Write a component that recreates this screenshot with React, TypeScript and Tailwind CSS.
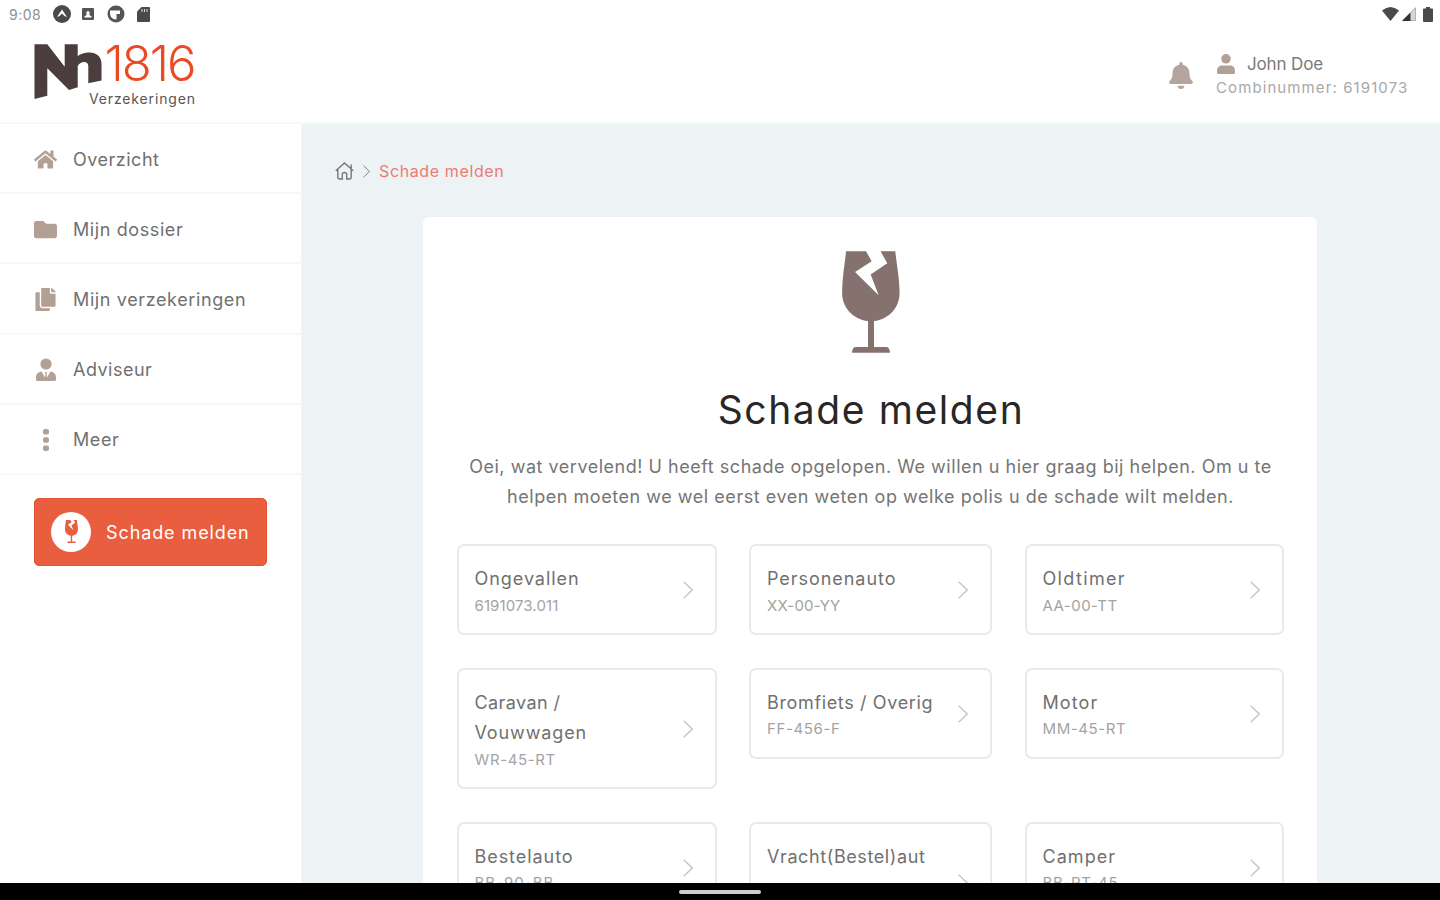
import React from "react";
import { FaBell, FaCopy, FaFolder, FaHome } from "react-icons/fa";

function BrokenGlass({ className }: { className?: string }) {
  return (
    <svg viewBox="126 61 174 307" className={className} fill="currentColor">
      <path d="M138 62H198L215 92L165 124L236 194L212 132L262 98L242 62H286C290 100 299 145 299 188C299 230 268 266 222 272V350H258Q270 350 270 367H156Q156 350 168 350H204V272C158 266 126 230 126 188C126 145 134 100 138 62Z" />
    </svg>
  );
}

function Logo() {
  return (
    <svg className="block h-[72px] w-[170px]" viewBox="0 0 170 72">
      <path
        fill="#4b3d3d"
        d="M0.5 4.3H13.3L30.7 26.7V4.3H43.7V16C48 12.800 53 11.800 58 12.700C64.500 13.800 67.500 18 67.500 24V40.500L54.300 43.300V26C54.300 20.500 46.500 20.800 43.700 26V47.300L35 50L13.300 28.300V55.700L0.500 59Z"
      />
      <text x="70.500" y="40.500" fill="#ea4b25" fontSize="49" fontWeight="300" letterSpacing="-2" fontFamily="Inter, sans-serif">
        1816
      </text>
      <text x="55" y="64" fill="#5c5555" fontSize="14" letterSpacing="0.86" fontFamily="Inter, sans-serif">
        Verzekeringen
      </text>
    </svg>
  );
}

function PersonIcon({ className }: { className?: string }) {
  return (
    <svg viewBox="0 0 18 20" className={className} fill="currentColor">
      <circle cx="9" cy="4.800" r="4.800" />
      <path d="M0 17.500C0 13.500 2 11.500 5 11.500H13C16 11.500 18 13.500 18 17.500V18.500Q18 20 16.500 20H1.500Q0 20 0 18.500Z" />
    </svg>
  );
}

function AdviserIcon() {
  return (
    <svg viewBox="0 0 20 24" className="h-6 w-5" fill="currentColor">
      <circle cx="10" cy="6" r="5.600" />
      <path d="M0 20C0 16 2 14 5.500 13.500L9 19.500L9.500 16L9 14H11L10.500 16L11 19.500L14.500 13.500C18 14 20 16 20 20V21.500Q20 23 18.500 23H1.500Q0 23 0 21.500Z" />
    </svg>
  );
}

function DotsIcon() {
  return (
    <svg viewBox="0 0 6 22" className="h-[22px] w-1.5" fill="currentColor">
      <rect width="6" height="5.500" y="0" rx="2" />
      <rect width="6" height="5.500" y="8.200" rx="2" />
      <rect width="6" height="5.500" y="16.400" rx="2" />
    </svg>
  );
}

function Chevron({ className }: { className?: string }) {
  return (
    <svg viewBox="0 0 10 18" className={className} fill="none" stroke="currentColor" strokeWidth="1.300">
      <path d="M0.700 0.700L9.200 9L0.700 17.300" />
    </svg>
  );
}

function StatusBar() {
  return (
    <div className="flex h-7 shrink-0 items-center justify-between pr-[7px] pl-[9px] text-[#4a4a4a]">
      <div className="flex items-center">
        <span className="w-[44px] pt-px text-sm tracking-[0.48px] text-[#8f8f8f]">9:08</span>
        <svg className="h-[18px] w-[18px]" viewBox="0 0 18 18">
          <circle cx="9" cy="9" r="9" fill="#4a4a4a" />
          <path d="M4 12L9 4.500L14 12L11.500 11L9 8.500L6.500 11Z" fill="#fff" />
        </svg>
        <svg className="ml-[11px] h-3 w-3" viewBox="0 0 12 12">
          <rect width="12" height="12" rx="1" fill="#555" />
          <path d="M2.500 9.500V8.500L4.500 7V4.500a1.500 1.500 0 0 1 3 0V7L9.500 8.500V9.500Z" fill="#fff" />
        </svg>
        <svg className="ml-[13px] h-[18px] w-[18px]" viewBox="0 0 18 18">
          <circle cx="9" cy="9" r="8.500" fill="#555" />
          <path d="M3 5.500H13V9H9.500V14.500C5.500 14.500 3 11.500 3 8.500Z" fill="#fff" />
        </svg>
        <svg className="ml-3 h-[15px] w-[13px]" viewBox="0 0 13 15">
          <path d="M4.500 0H12Q13 0 13 1V14Q13 15 12 15H1Q0 15 0 14V4.500Z" fill="#4a4a4a" />
          <path d="M5 2V5M7.500 2V5M10 2V5" stroke="#ddd" strokeWidth="1" />
        </svg>
      </div>
      <div className="flex items-center">
        <svg className="h-[14px] w-[17px]" viewBox="0 0 17 14">
          <path d="M0 3.500Q8.500 -3.500 17 3.500L8.500 14Z" fill="#4a4a4a" />
        </svg>
        <svg className="ml-[3px] h-[14px] w-[14px]" viewBox="0 0 14 14">
          <path d="M13.500 0.700V13.500H0.700Z" fill="#d6d6d6" stroke="#8a8a8a" strokeWidth="0.600" />
          <path d="M8.500 5.500V14H0Z" fill="#333" />
        </svg>
        <svg className="ml-[7px] h-[15px] w-[10px]" viewBox="0 0 10 15">
          <path d="M3 0H7V1.500H9Q10 1.500 10 2.500V14Q10 15 9 15H1Q0 15 0 14V2.500Q0 1.500 1 1.500H3Z" fill="#4a4a4a" />
        </svg>
      </div>
    </div>
  );
}

const menu = [
  { label: "Overzicht", icon: <FaHome size={23} />, spacing: "tracking-[0.5px]" },
  { label: "Mijn dossier", icon: <FaFolder size={23} />, spacing: "tracking-[0.6px]" },
  { label: "Mijn verzekeringen", icon: <FaCopy size={23} />, spacing: "tracking-[0.62px]" },
  { label: "Adviseur", icon: <AdviserIcon />, spacing: "tracking-[0.48px]" },
  { label: "Meer", icon: <DotsIcon />, spacing: "tracking-[0.58px]" },
];

type Policy = { name: React.ReactNode; ts: string; code: string; cs: string };

const policies: Policy[] = [
  { name: "Ongevallen", ts: "tracking-[0.95px]", code: "6191073.011", cs: "tracking-[0.1px]" },
  { name: "Personenauto", ts: "tracking-[0.95px]", code: "XX-00-YY", cs: "tracking-[0.19px]" },
  { name: "Oldtimer", ts: "tracking-[1.35px]", code: "AA-00-TT", cs: "tracking-[0.47px]" },
  { name: <>Caravan /<br /><span className="tracking-[0.87px]">Vouwwagen</span></>, ts: "tracking-[0.41px]", code: "WR-45-RT", cs: "tracking-[0.62px]" },
  { name: "Bromfiets / Overig", ts: "tracking-[0.64px]", code: "FF-456-F", cs: "tracking-[0.63px]" },
  { name: "Motor", ts: "tracking-[1.1px]", code: "MM-45-RT", cs: "tracking-[0.6px]" },
  { name: "Bestelauto", ts: "tracking-[0.95px]", code: "BB-90-BB", cs: "tracking-[0.99px]" },
  { name: <>Vracht(Bestel)aut<br />{"\u00a0"}</>, ts: "tracking-[0.6px]", code: "VV-00-BB", cs: "tracking-[0.6px]" },
  { name: "Camper", ts: "tracking-[1.05px]", code: "BB-RT-45", cs: "tracking-[0.66px]" },
];

function PolicyCard({ name, ts, code, cs }: Policy) {
  return (
    <button className="flex items-center justify-between rounded-[7px] border-2 border-[#e9e9e9] pt-[18px] pr-[22px] pb-[16.5px] pl-4 text-left">
      <span className="flex flex-col whitespace-nowrap">
        <span className={`text-lg leading-[30.5px] text-[#707070] ${ts}`}>{name}</span>
        <span className={`text-[15px] leading-[22px] text-[#a3a3a3] ${cs}`}>{code}</span>
      </span>
      <Chevron className="h-[18px] w-[10px] shrink-0 text-[#c4c4c4]" />
    </button>
  );
}

export default function App() {
  return (
    <div className="flex h-[900px] w-[1440px] flex-col overflow-hidden bg-white font-['Inter',sans-serif]">
      <StatusBar />
      <header className="flex h-[96px] shrink-0 items-start justify-between border-b-2 border-[#f7f8f8] pr-8 pl-[34px]">
        <div className="pt-3">
          <Logo />
        </div>
        <div className="flex pt-6">
          <FaBell className="mt-[10px] mr-[23px] h-[27px] w-6 text-[#b3a49c]" />
          <div className="w-[192px]">
            <div className="flex h-6 items-center">
              <PersonIcon className="ml-px h-5 w-[18px] text-[#b3a095]" />
              <span className="ml-3 pt-px text-[17px] tracking-[-0.15px] text-[#7a7a7a]">John Doe</span>
            </div>
            <div className="text-[15px] leading-6 tracking-[1.1px] whitespace-nowrap text-[#a8a8a8]">
              Combinummer: 6191073
            </div>
          </div>
        </div>
      </header>

      <div className="flex min-h-0 flex-1">
        <aside className="w-[302px] shrink-0 border-r border-[#f2f5f6]">
          <nav>
            {menu.map((m) => (
              <a key={m.label} className="flex h-[70.2px] items-center border-b-2 border-[#f7f8f8] pt-[2px] pl-[34px]">
                <span className="flex w-[23px] justify-center text-[#b3a095]">{m.icon}</span>
                <span className={`ml-4 pt-px text-lg text-[#707070] ${m.spacing}`}>{m.label}</span>
              </a>
            ))}
          </nav>
          <button className="mt-[23px] ml-[34px] flex h-[68px] w-[233px] items-center rounded-[5px] border border-[#e4512f] bg-[#e95e3e] pl-4">
            <span className="flex h-10 w-10 items-center justify-center rounded-full bg-white">
              <BrokenGlass className="h-[23px] w-[13px] text-[#e95e3e]" />
            </span>
            <span className="ml-[15px] pt-[2px] text-lg tracking-[0.9px] text-white">Schade melden</span>
          </button>
        </aside>

        <main className="flex-1 bg-[#edf2f5] pt-px pl-8">
          <div className="flex h-[92px] items-center">
            <svg className="ml-px h-[18px] w-[19px]" viewBox="0 0 19 18" fill="none" stroke="#777" strokeWidth="1.400">
              <path d="M0.800 8.800L9.500 1L18.200 8.800M2.800 7.200V15Q2.800 17 4.800 17H7.300V12.500Q7.300 10.500 9.500 10.500Q11.700 10.500 11.700 12.500V17H14.200Q16.200 17 16.200 15V2.500" />
            </svg>
            <Chevron className="ml-[9px] h-[13px] w-[7px] text-[#777]" />
            <span className="ml-[9px] text-base tracking-[0.62px] text-[#f07a72]">Schade melden</span>
          </div>
          <section className="ml-[89px] flex h-[760px] w-[894px] flex-col items-center rounded-md bg-white pt-[34px]">
            <BrokenGlass className="ml-[2px] h-[102px] w-[58px] shrink-0 text-[#85716e]" />
            <h1 className="mt-[33px] ml-[2px] text-[39px] leading-[48px] tracking-[1.6px] text-[#2a2626]">Schade melden</h1>
            <p className="mt-[18px] ml-px text-center text-lg leading-[30px] whitespace-nowrap text-[#757575]">
              <span className="tracking-[0.52px]">
                Oei, wat vervelend! U heeft schade opgelopen. We willen u hier graag bij helpen. Om u te
              </span>
              <br />
              <span className="tracking-[0.54px]">
                helpen moeten we wel eerst even weten op welke polis u de schade wilt melden.
              </span>
            </p>
            <div className="mt-8 grid grid-cols-[260px_243px_259px] items-start gap-x-[32.5px] gap-y-[32.5px]">
              {policies.map((p) => (
                <PolicyCard key={p.code} {...p} />
              ))}
            </div>
          </section>
        </main>
      </div>

      <div className="z-10 flex h-[17px] shrink-0 items-center justify-center bg-black pt-px">
        <div className="h-1 w-[82px] rounded-full bg-[#cfcfcf]" />
      </div>
    </div>
  );
}
